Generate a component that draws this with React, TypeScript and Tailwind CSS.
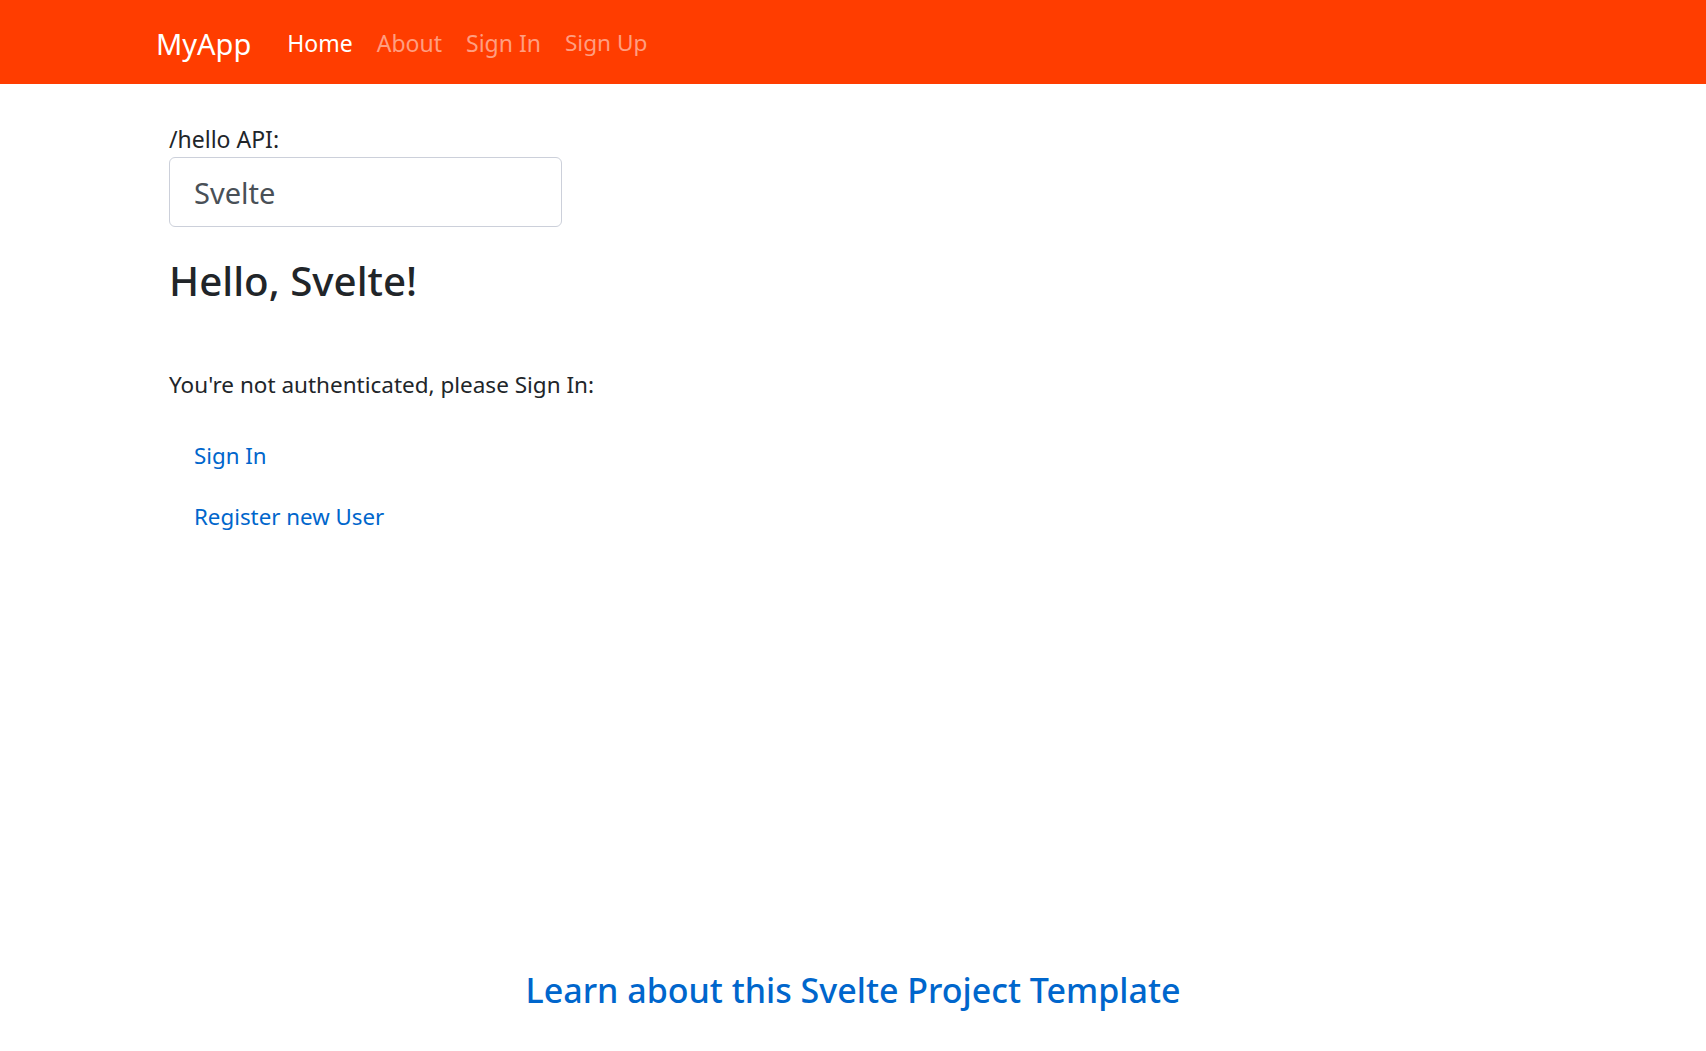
import React from "react";

export default function App() {
  const font = { fontFamily: '"Noto Sans", "Open Sans", sans-serif' };
  return (
    <div className="flex min-h-screen flex-col bg-white" style={font}>
      <nav className="flex h-[84px] items-center bg-[#ff3d00] pl-[156px] pt-[2px]">
        <span className="mr-[24px] text-[29px] leading-[45px] text-white">MyApp</span>
        <a className="px-[12px] text-[23px] leading-[36px] text-white">Home</a>
        <a className="px-[12px] text-[23px] leading-[36px] text-[#ff9e80]">About</a>
        <a className="px-[12px] text-[23px] leading-[36px] text-[#ff9e80]">Sign In</a>
        <a className="px-[12px] text-[22.6px] leading-[36px] text-[#ff9e80]">Sign Up</a>
      </nav>
      <main className="flex-1 pl-[169px] pt-[37px]">
        <div className="text-[23px] leading-[36px] text-[#212529]">/hello API:</div>
        <div className="flex h-[70px] w-[393px] items-center rounded-[6px] border-[1.5px] border-[#ccd0da] pl-[24px] pt-[2px] text-[29px] text-[#495057]">
          Svelte
        </div>
        <h3 className="mt-[29px] text-[40.3px] font-medium leading-[50px] text-[#212529]">Hello, Svelte!</h3>
        <p className="mt-[61px] text-[22.5px] leading-[36px] text-[#212529]">
          You're not authenticated, please Sign In:
        </p>
        <div className="pl-[25px]">
          <a className="mt-[35px] block text-[22.3px] leading-[36px] text-[#0066cc]">Sign In</a>
          <a className="mt-[25px] block text-[22.3px] leading-[36px] text-[#0066cc]">Register new User</a>
        </div>
      </main>
      <footer className="mb-[39px] text-center">
        <a className="text-[34px] font-medium leading-[43px] text-[#0066cc]">
          Learn about this Svelte Project Template
        </a>
      </footer>
    </div>
  );
}
